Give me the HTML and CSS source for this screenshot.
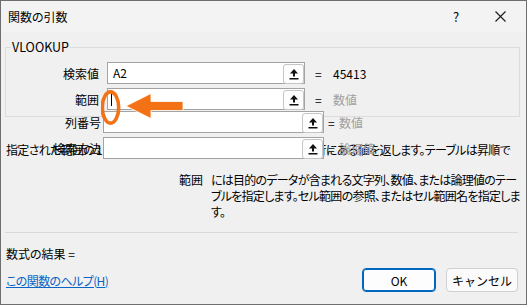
FILE: index.html
```html
<!DOCTYPE html>
<html lang="ja">
<head>
<meta charset="UTF-8">
<meta name="viewport" content="width=device-width, initial-scale=1.0">
<title>関数の引数</title>
<link rel="stylesheet" href="styles.css">
</head>
<body>
  <div class="dialog">
    <div class="titlebar">
      <span class="title">関数の引数</span>
      <span class="title-btn help">?</span>
      <span class="title-btn close">
        <svg width="11" height="11" viewBox="0 0 11 11"><path d="M0.5 0.5 L10.5 10.5 M10.5 0.5 L0.5 10.5" stroke="#1a1a1a" stroke-width="1.1" fill="none"/></svg>
      </span>
    </div>

    <div class="content">
      <fieldset class="group">
        <legend>VLOOKUP</legend>
        <div class="arg-row">
          <span class="arg-label">検索値</span>
          <div class="arg-box"><span class="arg-text">A2</span><span class="ref-btn"><svg width="12" height="12" viewBox="0 0 12 12"><path d="M6 1 L10 5.5 L7 5.5 L7 8.5 L5 8.5 L5 5.5 L2 5.5 Z M1.5 10 L10.5 10 L10.5 11.5 L1.5 11.5 Z" fill="#111"/></svg></span></div>
          <span class="arg-eq">=</span>
          <span class="arg-value">45413</span>
        </div>
        <div class="arg-row">
          <span class="arg-label">範囲</span>
          <div class="arg-box"><span class="arg-text"><span class="caret"></span></span><span class="ref-btn"><svg width="12" height="12" viewBox="0 0 12 12"><path d="M6 1 L10 5.5 L7 5.5 L7 8.5 L5 8.5 L5 5.5 L2 5.5 Z M1.5 10 L10.5 10 L10.5 11.5 L1.5 11.5 Z" fill="#111"/></svg></span></div>
          <span class="arg-eq">=</span>
          <span class="arg-value muted">数値</span>
        </div>
      </fieldset>

      <!-- annotation over the 範囲 box -->
      <svg class="callout" width="90" height="40" viewBox="0 0 90 40">
        <ellipse cx="9.5" cy="17.5" rx="8.2" ry="15.6" fill="none" stroke="#f47216" stroke-width="3.6"/>
        <path d="M25 16 L50 3.5 L50 11.5 L82 11.5 L82 20.5 L50 20.5 L50 28.5 Z" fill="#f47216" stroke="#fff" stroke-width="0.8"/>
      </svg>

      <div class="loose-rows">
        <p class="fn-desc">指定された範囲の 1 列目で特定の値を検索し、指定した列と同じ行にある値を返します。テーブルは昇順で</p>
        <div class="arg-row wide">
          <span class="arg-label">列番号</span>
          <div class="arg-box"><span class="arg-text"></span><span class="ref-btn"><svg width="12" height="12" viewBox="0 0 12 12"><path d="M6 1 L10 5.5 L7 5.5 L7 8.5 L5 8.5 L5 5.5 L2 5.5 Z M1.5 10 L10.5 10 L10.5 11.5 L1.5 11.5 Z" fill="#111"/></svg></span></div>
          <span class="arg-eq">=</span>
          <span class="arg-value muted">数値</span>
        </div>
        <div class="arg-row wide">
          <span class="arg-label">検索方法</span>
          <div class="arg-box"><span class="arg-text"></span><span class="ref-btn"><svg width="12" height="12" viewBox="0 0 12 12"><path d="M6 1 L10 5.5 L7 5.5 L7 8.5 L5 8.5 L5 5.5 L2 5.5 Z M1.5 10 L10.5 10 L10.5 11.5 L1.5 11.5 Z" fill="#111"/></svg></span></div>
          <span class="arg-eq">=</span>
          <span class="arg-value muted">論理値</span>
        </div>
      </div>

      <div class="arg-help">
        <span class="arg-help-name">範囲</span>
        <span class="arg-help-text">には目的のデータが含まれる文字列、数値、または論理値のテー<br>ブルを指定します。セル範囲の参照、またはセル範囲名を指定しま<br>す。</span>
      </div>

      <div class="separator"></div>

      <div class="result">数式の結果 =</div>

      <div class="footer">
        <a class="help-link" href="#">この関数のヘルプ(H)</a>
        <button class="btn primary" type="button">OK</button>
        <button class="btn" type="button">キャンセル</button>
      </div>
    </div>
  </div>
</body>
</html>
```

FILE: styles.css
```css
body {
  margin: 0;
  padding: 0;
  font-family: "Noto Sans CJK JP", "Noto Sans", sans-serif;
  font-size: 12px;
  font-feature-settings: "palt";
  color: #000;
  background: #f0f0f0;
}

.dialog {
  width: 525px;
  height: 303px;
  border: 1px solid #6e6e6e;
  background: #f0f0f0;
  overflow: hidden;
}

.titlebar {
  height: 31px;
  background: #f3f3f3;
  display: flex;
  align-items: center;
  padding-left: 7px;
}

.title {
  flex: 1;
  font-size: 12px;
}

.title-btn {
  display: flex;
  align-items: center;
  justify-content: center;
}

.help {
  font-size: 13px;
  width: 12px;
  margin-right: 33px;
}

.close {
  width: 11px;
  margin-right: 20px;
}

.content {
  position: relative;
  padding: 0 6px 0 4px;
}

/* group box */
.group {
  margin: 7px 0 0 0;
  padding: 7px 0 2px 0;
  border: 1px solid #dcdcdc;
}

.group legend {
  padding: 0 1px;
  margin-left: 5px;
  line-height: 16px;
  font-size: 12.5px;
}

.arg-row {
  display: flex;
  align-items: center;
  height: 22px;
  margin-bottom: 4px;
}

.arg-label {
  width: 93px;
  text-align: right;
  margin-right: 8px;
  white-space: nowrap;
}

.arg-box {
  display: flex;
  width: 196px;
  height: 20px;
  border: 1px solid #a3a3a3;
  background: #fff;
}

.arg-text {
  flex: 1;
  padding-left: 5px;
  line-height: 20px;
  display: flex;
  align-items: center;
}

.caret {
  display: block;
  width: 1px;
  height: 14px;
  background: #000;
  margin-left: -2px;
}

.ref-btn {
  width: 19px;
  height: 18px;
  border: 1px solid #c5c5c5;
  border-radius: 3px;
  background: #fdfdfd;
  display: flex;
  align-items: center;
  justify-content: center;
  margin-top: 1px;
}

.arg-eq {
  margin-left: 10px;
  width: 18px;
}

.arg-value.muted {
  color: #a0a0a0;
}

/* rows outside the group box */
.loose-rows {
  position: relative;
  margin-top: -6px;
}

.loose-rows .arg-row {
  position: relative;
}

.wide .arg-label {
  width: 96px;
  margin-right: 2px;
}

.wide .arg-box {
  width: 219px;
}

.wide .arg-eq {
  margin-left: 4px;
  width: 11px;
}

.fn-desc {
  position: absolute;
  left: 1px;
  top: 31px;
  margin: 0;
  line-height: 16px;
  white-space: nowrap;
  letter-spacing: -0.7px;
}

.callout {
  position: absolute;
  z-index: 2;
  left: 100px;
  top: 51px;
}

.arg-help {
  display: flex;
  margin-top: 13px;
  line-height: 16px;
  white-space: nowrap;
}

.arg-help-name {
  flex-shrink: 0;
  margin-left: 174px;
  width: 32px;
}

.arg-help-text {
  letter-spacing: -0.75px;
}

.separator {
  height: 1px;
  background: #d9d9d9;
  margin-top: 12px;
  margin-right: 2px;
}

.result {
  margin-top: 13px;
  margin-left: 1px;
  line-height: 16px;
  font-size: 12px;
}

.footer {
  display: flex;
  align-items: center;
  margin-top: 6px;
}

.help-link {
  flex: 1;
  color: #0b63c4;
  margin-left: 1px;
  font-size: 12px;
  letter-spacing: -0.6px;
}

.btn {
  font-family: inherit;
  font-size: 12px;
  width: 72px;
  height: 24px;
  padding: 0;
  white-space: nowrap;
  border: 1px solid #d0d0d0;
  border-radius: 4px;
  background: #fbfbfb;
  color: #000;
  margin-right: 2px;
}

.btn.primary {
  width: 74px;
  border: 1px solid #0067c0;
  box-shadow: inset 0 0 0 1px #0067c0;
  background: #fdfdfd;
  margin-right: 10px;
}
```
